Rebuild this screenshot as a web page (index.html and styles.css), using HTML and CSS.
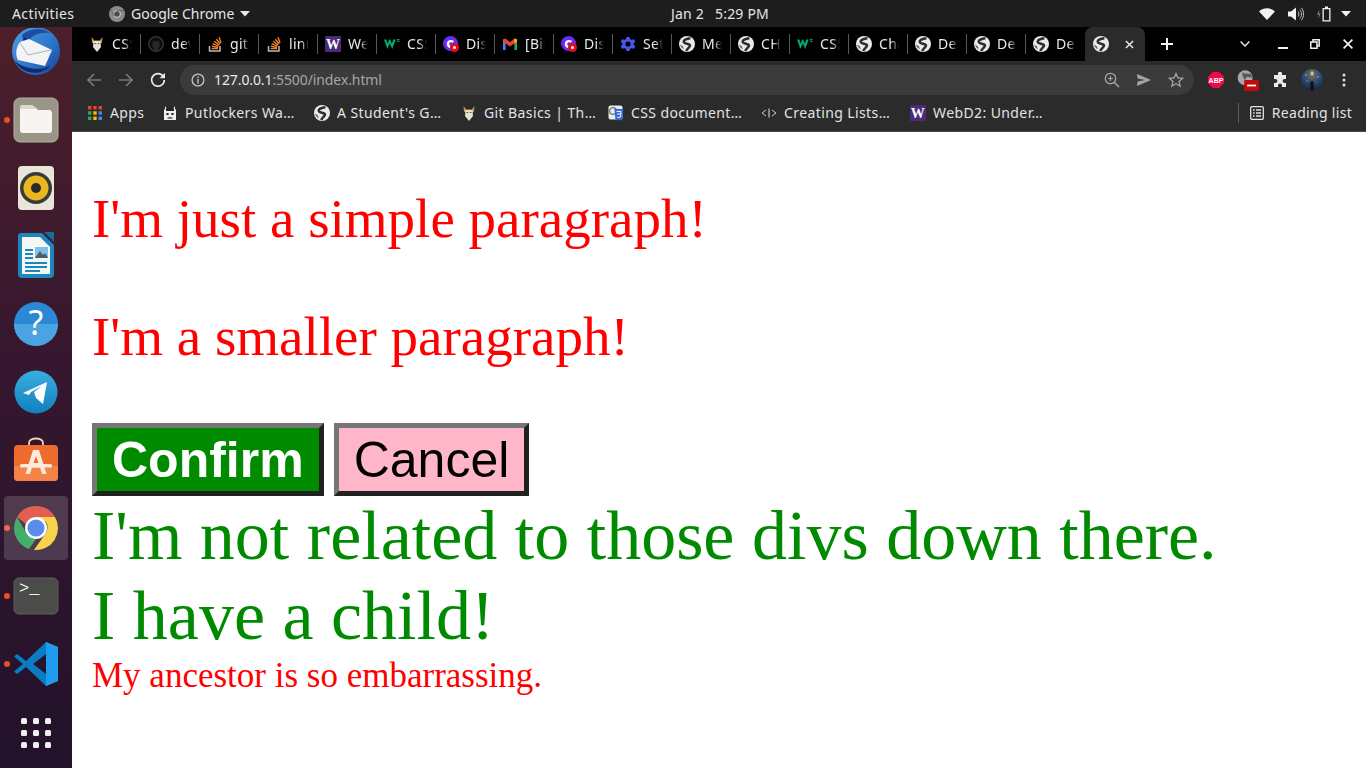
FILE: index.html
```html
<!DOCTYPE html>
<html lang="en">
<head>
<meta charset="utf-8">
<title>Screenshot</title>
<link rel="stylesheet" href="styles.css">
</head>
<body>
<svg class="sprite" aria-hidden="true">
  <defs>
    <symbol id="globe" viewBox="0 0 16 16">
      <circle cx="8" cy="8" r="8" fill="#e8eaed"/>
      <path d="M11.4 2.2 C7.4 2.6 4.2 4.2 4.8 6.2 C5.4 8.2 10.6 7.2 11 9.4 C11.3 11.2 8.6 11.6 7.2 15" fill="none" stroke="#2c2d2f" stroke-width="2.5"/>
      <path d="M1 8.6 L4 10.6 L4.6 13.4 A7 7 0 0 1 1 8.6Z" fill="#5a5b5d"/>
    </symbol>
    <symbol id="odin" viewBox="0 0 16 16">
      <path d="M2.5 1 L5.2 4.6 L10.8 4.6 L13.5 1 L13 6.4 L11 8 L5 8 L3 6.4Z" fill="#c79a4e"/>
      <path d="M4.4 5 H11.6 V7 L12 11 L8 16 L4 11 L4.4 7Z" fill="#e7e1d4"/>
      <path d="M5.6 7 h1.6 v1 h-1.6z M8.8 7 h1.6 v1 h-1.6z" fill="#5b4a32"/>
    </symbol>
    <symbol id="so" viewBox="0 0 16 16">
      <path d="M2.5 10 V15 H13 V10" fill="none" stroke="#bcbbbb" stroke-width="1.5"/>
      <path d="M4.6 12.6 H11 M4.9 10.2 L11.1 11.5 M5.7 7.6 L11.5 10.2 M7.2 5.2 L12.2 9 M9.4 3.2 L13.2 8 M12 1.2 L14 6.8" stroke="#f48024" stroke-width="1.4" fill="none"/>
    </symbol>
    <symbol id="uw" viewBox="0 0 16 16">
      <rect width="16" height="16" fill="#4b2a7b"/>
      <text x="8" y="13" text-anchor="middle" class="uw-letter">W</text>
    </symbol>
    <symbol id="w3" viewBox="0 0 16 16">
      <path d="M0 3.6 L3.4 13 L5.8 7.4 L8.2 13 L11.8 3.6 H9.2 L7.9 7.6 L6.2 3.6 H5.2 L3.6 7.6 L2.4 3.6Z" fill="#04aa6d"/>
      <path d="M13 3 h2.4 v1 h-1.4 v.6 h1.4 v1.4 h-2.4 v-.8 h1.4 v-.6 h-1.4z" fill="#04aa6d"/>
    </symbol>
    <symbol id="dis" viewBox="0 0 16 16">
      <circle cx="7.5" cy="7.5" r="7.5" fill="#6a2cf0"/>
      <path d="M3.8 8 C3.8 4 8 3 11 5 L9.8 6.8 C8 5.8 6.2 6.4 6.2 8 C6.2 9.4 7.4 10 8.6 9.8 L8 12 C5.4 12.4 3.8 10.4 3.8 8Z" fill="#fff"/>
      <circle cx="11.5" cy="11.5" r="4.5" fill="#e8091c"/>
      <circle cx="11.5" cy="11.5" r="1.5" fill="#fff"/>
    </symbol>
  </defs>
</svg>

<div class="screen">
  <header class="topbar">
    <span class="top-activities">Activities</span>
    <span class="top-app">
      <svg class="top-app-icon" viewBox="0 0 16 16"><circle cx="8" cy="8" r="8" fill="#8b8b8b"/><circle cx="8" cy="8" r="3.4" fill="#4a4a4a" stroke="#d8d8d8" stroke-width="1"/><path d="M8 4.6 H15 M5 9.8 L2 4" stroke="#5f5f5f" stroke-width="1"/></svg>
      <span>Google Chrome</span>
      <svg class="caret" viewBox="0 0 10 6"><path d="M0 0 H10 L5 5.5Z" fill="#e8e8e8"/></svg>
    </span>
    <span class="top-clock"><span>Jan 2</span><span>5:29 PM</span></span>
    <span class="top-tray">
      <svg class="tray-wifi" viewBox="0 0 16 12"><path d="M0 3.6 C4.4 -0.8 11.6 -0.8 16 3.6 L8 12Z" fill="#f2f2f2"/></svg>
      <svg class="tray-vol" viewBox="0 0 16 16"><path d="M0 5.5 H3 L8 1.5 V14.5 L3 10.5 H0Z" fill="#f2f2f2"/><path d="M10 5.5 C11.2 7 11.2 9 10 10.5 M11.8 3.5 C14 6 14 10 11.8 12.5 M13.4 1.8 C16.4 5.4 16.4 10.6 13.4 14.2" stroke="#c4c4c4" stroke-width="1" fill="none"/></svg>
      <svg class="tray-bat" viewBox="0 0 14 16"><path d="M2.6 3.5 L0 8.5 H2 L1 13 L3.6 7.4 H1.8Z" fill="#8a8a8a"/><path d="M8 0.5 H11 V2 H13.5 V15.5 H5.5 V2 H8Z M6.8 3.2 V14.2 H12.2 V3.2Z" fill="#f2f2f2" fill-rule="evenodd"/></svg>
      <svg class="caret caret-tray" viewBox="0 0 10 6"><path d="M0 0 H10 L5 5.5Z" fill="#f2f2f2"/></svg>
    </span>
  </header>

  <div class="desktop">
    <nav class="dock">
      <ul class="dock-list">
        <li class="dock-item">
          <svg class="ic48" viewBox="0 0 48 48">
            <defs><linearGradient id="tb" x1="0" y1="0" x2="1" y2="1"><stop offset="0" stop-color="#4fa2e6"/><stop offset=".6" stop-color="#2a73c8"/><stop offset="1" stop-color="#173f95"/></linearGradient></defs>
            <circle cx="24" cy="23" r="24" fill="url(#tb)"/>
            <path d="M10 7 C18 0 30 -1 38 5 C28 4 21 7 17 12 L12 16Z" fill="#1d4ea3"/>
            <circle cx="13" cy="11" r="1.6" fill="#0f2c66"/>
            <path d="M8 14 L17 11 L40 22 L33 38 L6 32 C3 27 4 19 8 14Z" fill="#f4f4f7"/>
            <path d="M8 15 L16 27 L39 22" fill="none" stroke="#a9b3c2" stroke-width="1"/>
            <path d="M2 32 C10 40 26 44 38 38 C32 46 12 50 2 32Z" fill="#13296d"/>
          </svg>
        </li>
        <li class="dock-item dock-running">
          <svg class="ic48" viewBox="0 0 48 48">
            <rect x="2" y="2" width="44" height="44" rx="6" fill="#9b9586" stroke="#b6b0a3" stroke-width="1"/>
            <path d="M8 12 A3 3 0 0 1 11 9 H20 L26 14 H36 A3 3 0 0 1 40 17 V34 A3 3 0 0 1 37 37 H11 A3 3 0 0 1 8 34Z" fill="#f6f5f2"/>
            <path d="M8 12 A3 3 0 0 1 11 9 H20 L26 13 H8Z" fill="#dad7cf"/>
          </svg>
        </li>
        <li class="dock-item">
          <svg class="ic48" viewBox="0 0 48 48">
            <rect x="6" y="2" width="36" height="44" rx="4" fill="#e9e5d8"/>
            <circle cx="24" cy="24" r="16" fill="#3a3a38"/>
            <circle cx="24" cy="24" r="12.5" fill="#e9b820"/>
            <circle cx="24" cy="24" r="5" fill="#2a2a2a"/>
          </svg>
        </li>
        <li class="dock-item">
          <svg class="ic48" viewBox="0 0 48 48">
            <path d="M32 0 H42 V10Z" fill="#1a6a9c"/>
            <path d="M9 1 H30 L42 13 V42 A4 4 0 0 1 38 46 H10 A4 4 0 0 1 6 42 V4 A3 3 0 0 1 9 1Z" fill="#1b87bf"/>
            <path d="M10 5 H28 L38 15 V42 H10Z" fill="#f6f6f4"/>
            <path d="M13 17 H21 V19 H13Z M13 21 H21 V23 H13Z M13 25 H21 V27 H13Z M13 30 H35 V32 H13Z M13 34 H35 V36 H13Z M13 38 H28 V40 H13Z" fill="#1b87bf"/>
            <rect x="23" y="15" width="13" height="11" fill="#7fc2e4"/>
            <path d="M23 26 L28 19 L31 23 L33 21 L36 26Z" fill="#4e5d68"/>
          </svg>
        </li>
        <li class="dock-item">
          <svg class="ic48" viewBox="0 0 48 48">
            <circle cx="24" cy="24" r="22" fill="#2a88d6"/>
            <path d="M2 24 H46 A22 22 0 0 1 2 24Z" fill="#4aa3e2"/>
            <text x="24" y="35" text-anchor="middle" class="help-mark">?</text>
          </svg>
        </li>
        <li class="dock-item">
          <svg class="ic48" viewBox="0 0 48 48">
            <defs><linearGradient id="tg" x1="0" y1="0" x2="0" y2="1"><stop offset="0" stop-color="#37aee2"/><stop offset="1" stop-color="#1280bd"/></linearGradient></defs>
            <circle cx="24" cy="24" r="21.5" fill="url(#tg)"/>
            <path d="M11 25 L35 14 L31 36 L24 30 L22 24 L30 18 L19 24 L17 27Z" fill="#fff"/>
          </svg>
        </li>
        <li class="dock-item">
          <svg class="ic48" viewBox="0 0 48 48">
            <path d="M17 10 V7 C17 1 31 1 31 7 V10" fill="none" stroke="#f3d6ae" stroke-width="1.8"/>
            <rect x="2" y="9" width="44" height="36" rx="4" fill="#ee6c30"/>
            <path d="M2 30 H46 V41 A4 4 0 0 1 42 45 H6 A4 4 0 0 1 2 41Z" fill="#f58248"/>
            <path d="M21 14 H27 L34.5 38 H30 L28 31.5 H20 L18 38 H13.5Z M24 20 L21.5 27 H26.5Z" fill="#fbe9dc"/>
            <rect x="8" y="28" width="32" height="3.5" rx="1.5" fill="#fbe9dc"/>
          </svg>
        </li>
        <li class="dock-item dock-running dock-active">
          <svg class="ic48" viewBox="0 0 48 48">
            <path d="M24 2 A22 22 0 0 1 43 13 H24 A11 11 0 0 0 14 20 L5 13 A22 22 0 0 1 24 2Z" fill="#d9412f"/>
            <path d="M5 13 L14.5 29.5 A11 11 0 0 0 24 35 L17 45 A22 22 0 0 1 5 13Z" fill="#1f9e50"/>
            <path d="M43 13 A22 22 0 0 1 22 46 L33.5 29.5 A11 11 0 0 0 34 18 L24 13Z" fill="#f8cb2d"/>
            <circle cx="24" cy="24" r="11" fill="#fff"/>
            <circle cx="24" cy="24" r="8.6" fill="#3b78e7"/>
          </svg>
        </li>
        <li class="dock-item dock-running">
          <svg class="ic48" viewBox="0 0 48 48">
            <rect x="2" y="6" width="44" height="36" rx="5" fill="#4b4b49" stroke="#5e5e5c" stroke-width="1"/>
            <text x="7" y="21" class="term-mark">&gt;_</text>
          </svg>
        </li>
        <li class="dock-item dock-running">
          <svg class="ic48" viewBox="0 0 48 48">
            <path d="M34 2 L46 7 V41 L34 46 L14 27 L5 34 L2 31.5 L11 24 L2 16.5 L5 14 L14 21Z M34 14 L21 24 L34 34Z" fill="#0a7cc4"/>
            <path d="M34 2 L46 7 V41 L34 46Z" fill="#1f9cf0"/>
          </svg>
        </li>
        <li class="dock-item">
          <svg class="ic-apps" viewBox="0 0 30 30">
            <rect x="0" y="0" width="6" height="6" rx="1.5"/><rect x="12" y="0" width="6" height="6" rx="1.5"/><rect x="24" y="0" width="6" height="6" rx="1.5"/>
            <rect x="0" y="12" width="6" height="6" rx="1.5"/><rect x="12" y="12" width="6" height="6" rx="1.5"/><rect x="24" y="12" width="6" height="6" rx="1.5"/>
            <rect x="0" y="24" width="6" height="6" rx="1.5"/><rect x="12" y="24" width="6" height="6" rx="1.5"/><rect x="24" y="24" width="6" height="6" rx="1.5"/>
          </svg>
        </li>
      </ul>
    </nav>

    <div class="browser">
      <div class="tabstrip">
        <div class="tab"><svg class="fav"><use href="#odin"/></svg><span class="tab-title">CSS</span></div>
        <div class="tab"><svg class="fav" viewBox="0 0 16 16"><circle cx="8" cy="8" r="7.2" fill="#0c0c0d" stroke="#2e3033" stroke-width="1.6"/><path d="M5.8 15 V12.4 C4 11 3.8 8 4.8 6.8 C4.6 5.8 4.8 5 5 4.6 C5.8 4.6 6.4 5 6.8 5.4 C7.6 5.2 8.4 5.2 9.2 5.4 C9.6 5 10.2 4.6 11 4.6 C11.2 5 11.4 5.8 11.2 6.8 C12.2 8 12 11 10.2 12.4 V15Z" fill="#25272a"/></svg><span class="tab-title">dev</span></div>
        <div class="tab"><svg class="fav"><use href="#so"/></svg><span class="tab-title">git</span></div>
        <div class="tab"><svg class="fav"><use href="#so"/></svg><span class="tab-title">linux</span></div>
        <div class="tab"><svg class="fav"><use href="#uw"/></svg><span class="tab-title">Web</span></div>
        <div class="tab"><svg class="fav"><use href="#w3"/></svg><span class="tab-title">CSS</span></div>
        <div class="tab"><svg class="fav"><use href="#dis"/></svg><span class="tab-title">Disc</span></div>
        <div class="tab"><svg class="fav" viewBox="0 0 16 16"><path d="M1 14 V3.4 L3.6 2.4 V14Z" fill="#4285f4"/><path d="M12.4 14 V2.4 L15 3.4 V14Z" fill="#34a853"/><path d="M1 3.4 L3.4 2.4 L8 6.2 L12.6 2.4 L15 3.4 V5.4 L8 10.6 L1 5.4Z" fill="#ea4335"/><path d="M12.4 2.4 L15 3.4 V5.4 L12.4 7.4Z" fill="#fbbc04"/></svg><span class="tab-title">[Bit</span></div>
        <div class="tab"><svg class="fav"><use href="#dis"/></svg><span class="tab-title">Disc</span></div>
        <div class="tab"><svg class="fav" viewBox="0 0 16 16"><path d="M6.4 1 H9.6 L10 3 L11.8 3.9 L13.8 3 L15.4 5.8 L13.8 7.1 V8.9 L15.4 10.2 L13.8 13 L11.8 12.1 L10 13 L9.6 15 H6.4 L6 13 L4.2 12.1 L2.2 13 L0.6 10.2 L2.2 8.9 V7.1 L0.6 5.8 L2.2 3 L4.2 3.9 L6 3Z M8 5.4 A2.6 2.6 0 1 0 8 10.6 A2.6 2.6 0 1 0 8 5.4Z" fill="#4a55e8" fill-rule="evenodd"/></svg><span class="tab-title">Sett</span></div>
        <div class="tab"><svg class="fav"><use href="#globe"/></svg><span class="tab-title">Men</span></div>
        <div class="tab"><svg class="fav"><use href="#globe"/></svg><span class="tab-title">CHA</span></div>
        <div class="tab"><svg class="fav"><use href="#w3"/></svg><span class="tab-title">CSS</span></div>
        <div class="tab"><svg class="fav"><use href="#globe"/></svg><span class="tab-title">Cha</span></div>
        <div class="tab"><svg class="fav"><use href="#globe"/></svg><span class="tab-title">Des</span></div>
        <div class="tab"><svg class="fav"><use href="#globe"/></svg><span class="tab-title">Des</span></div>
        <div class="tab tab-last"><svg class="fav"><use href="#globe"/></svg><span class="tab-title">Des</span></div>
        <div class="tab-active">
          <svg class="fav"><use href="#globe"/></svg>
          <svg class="tab-close" viewBox="0 0 10 10"><path d="M1 1 L9 9 M9 1 L1 9" stroke="#e8eaed" stroke-width="1.6"/></svg>
        </div>
        <svg class="new-tab" viewBox="0 0 12 12"><path d="M6 0 V12 M0 6 H12" stroke="#f1f3f4" stroke-width="2"/></svg>
        <svg class="win-chevron" viewBox="0 0 10 6"><path d="M0.6 0.6 L5 5 L9.4 0.6" fill="none" stroke="#e8eaed" stroke-width="1.4"/></svg>
        <svg class="win-min" viewBox="0 0 10 10"><path d="M0 9 H10" stroke="#f1f1f1" stroke-width="2"/></svg>
        <svg class="win-max" viewBox="0 0 10 10"><path d="M3 3 V0.8 H9.2 V7 H7 M0.8 3 H7 V9.2 H0.8Z" fill="none" stroke="#f1f1f1" stroke-width="1.5"/></svg>
        <svg class="win-close" viewBox="0 0 10 10"><path d="M0.6 0.6 L9.4 9.4 M9.4 0.6 L0.6 9.4" stroke="#f1f1f1" stroke-width="1.7"/></svg>
      </div>

      <div class="toolbar">
        <svg class="tb-icon" viewBox="0 0 16 16"><path d="M15 8 H2 M8 2 L2 8 L8 14" fill="none" stroke="#77797c" stroke-width="1.7"/></svg>
        <svg class="tb-icon" viewBox="0 0 16 16"><path d="M1 8 H14 M8 2 L14 8 L8 14" fill="none" stroke="#77797c" stroke-width="1.7"/></svg>
        <svg class="tb-icon tb-reload" viewBox="0 0 16 16"><path d="M13.6 5 A6.3 6.3 0 1 0 14.3 8" fill="none" stroke="#e8eaed" stroke-width="1.7"/><path d="M9.6 6.2 H15 V0.8Z" fill="#e8eaed"/></svg>
        <div class="omnibox">
          <svg class="omni-info" viewBox="0 0 14 14"><circle cx="7" cy="7" r="5.9" fill="none" stroke="#c4c7c9" stroke-width="1.3"/><path d="M7 6 V10.4 M7 3.6 V5" stroke="#c4c7c9" stroke-width="1.4"/></svg>
          <span class="omni-url"><b>127.0.0.1</b>:5500/index.html</span>
          <svg class="omni-act" viewBox="0 0 16 16"><circle cx="6.5" cy="6.5" r="5.2" fill="none" stroke="#a3a6a9" stroke-width="1.3"/><path d="M10.2 10.2 L15 15" stroke="#a3a6a9" stroke-width="1.6"/><path d="M6.5 4 V9 M4 6.5 H9" stroke="#a3a6a9" stroke-width="1.1"/></svg>
          <svg class="omni-act" viewBox="0 0 16 16"><path d="M1 2 L15 8 L1 14 L1.6 9.4 L9 8 L1.6 6.6Z" fill="#a3a6a9"/></svg>
          <svg class="omni-act" viewBox="0 0 16 16"><path d="M8 1.6 L9.9 6 L14.6 6.4 L11 9.5 L12.1 14.2 L8 11.7 L3.9 14.2 L5 9.5 L1.4 6.4 L6.1 6Z" fill="none" stroke="#a3a6a9" stroke-width="1.3"/></svg>
        </div>
        <div class="ext-row">
          <span class="ext"><svg class="ext-icon" viewBox="0 0 16 16"><path d="M4.8 0 H11.2 L16 4.8 V11.2 L11.2 16 H4.8 L0 11.2 V4.8Z" fill="#f2074a"/><text x="8" y="10.8" text-anchor="middle" class="abp-mark">ABP</text></svg></span>
          <span class="ext"><svg class="ext-icon ext-wide" viewBox="0 0 20 20"><circle cx="7.4" cy="8" r="6.8" fill="#a5a7a9"/><path d="M5 2.4 C7 5 9 3.6 12.6 4.6 L14 8 L9 7 L7 10 L5 6Z" fill="#55575a"/><rect x="6.5" y="10" width="13.5" height="10" rx="1" fill="#c20a0a"/><rect x="9.2" y="14.2" width="8.2" height="1.6" fill="#fff"/></svg></span>
          <span class="ext"><svg class="ext-icon" viewBox="0 0 16 16"><path d="M6 1.6 A2 2 0 0 1 10 1.6 V3 H14 V7 H12.6 A2 2 0 0 0 12.6 11 H14 V15 H10 V13.6 A2 2 0 0 0 6 13.6 V15 H2 V11 H3.4 A2 2 0 0 0 3.4 7 H2 V3 H6Z" fill="#e8eaed"/></svg></span>
          <span class="ext"><svg class="avatar" viewBox="0 0 22 22"><defs><radialGradient id="av" cx="50%" cy="25%" r="70%"><stop offset="0" stop-color="#7a6f5e"/><stop offset=".45" stop-color="#33537a"/><stop offset="1" stop-color="#1b2a42"/></radialGradient></defs><circle cx="11" cy="11" r="11" fill="url(#av)"/><rect x="9.6" y="2.5" width="3" height="4" rx="1" fill="#f2b860"/><circle cx="5" cy="6" r=".8" fill="#e8a860"/><circle cx="17" cy="8" r=".8" fill="#e8a860"/><circle cx="6" cy="12" r=".7" fill="#c89060"/><path d="M9 22 V15 L10 12 H12 L13 15 V22Z" fill="#14161c"/></svg></span>
          <span class="ext"><svg class="kebab" viewBox="0 0 4 14"><circle cx="2" cy="2" r="1.5" fill="#dfe1e3"/><circle cx="2" cy="7" r="1.5" fill="#dfe1e3"/><circle cx="2" cy="12" r="1.5" fill="#dfe1e3"/></svg></span>
        </div>
      </div>

      <div class="bookmarks">
        <span class="bm bm-apps"><svg class="fav" viewBox="0 0 16 16"><rect x="1" y="1" width="3.4" height="3.4" fill="#ea4335"/><rect x="6.3" y="1" width="3.4" height="3.4" fill="#ea4335"/><rect x="11.6" y="1" width="3.4" height="3.4" fill="#ea4335"/><rect x="1" y="6.3" width="3.4" height="3.4" fill="#34a853"/><rect x="6.3" y="6.3" width="3.4" height="3.4" fill="#fbbc04"/><rect x="11.6" y="6.3" width="3.4" height="3.4" fill="#4285f4"/><rect x="1" y="11.6" width="3.4" height="3.4" fill="#34a853"/><rect x="6.3" y="11.6" width="3.4" height="3.4" fill="#fbbc04"/><rect x="11.6" y="11.6" width="3.4" height="3.4" fill="#4285f4"/></svg><span class="bm-label">Apps</span></span>
        <span class="bm bm-put"><svg class="fav" viewBox="0 0 16 16"><path d="M3 1 L5 4 H11 L13 1 V4 L14 5 V15 H2 V5 L3 4Z" fill="#edeff2"/><path d="M4 3.4 H12 V6 H4Z" fill="#20242c"/><path d="M4.4 8 h2.2 v2 h-2.2z M9.4 8 h2.2 v2 h-2.2z M5 13.6 C6 11.8 10 11.8 11 13.6Z" fill="#20242c"/></svg><span class="bm-label">Putlockers Wa…</span></span>
        <span class="bm bm-stu"><svg class="fav"><use href="#globe"/></svg><span class="bm-label">A Student's G…</span></span>
        <span class="bm bm-git"><svg class="fav"><use href="#odin"/></svg><span class="bm-label">Git Basics | Th…</span></span>
        <span class="bm bm-css"><svg class="fav" viewBox="0 0 16 16"><rect x="0.5" y="0.5" width="14" height="14" rx="2" fill="#e8eaed"/><circle cx="5" cy="6" r="3.4" fill="none" stroke="#6e7278" stroke-width="1.2"/><path d="M6.4 4 H15.4 L14.4 14.4 L10.9 15.6 L7.4 14.4Z" fill="#3367d6"/><path d="M8.6 6.4 H13 L12.6 12 L10.9 12.7 L9.2 12 M9 9 H12.8" fill="none" stroke="#fff" stroke-width="1"/></svg><span class="bm-label">CSS document…</span></span>
        <span class="bm bm-cre"><svg class="fav" viewBox="0 0 16 16"><path d="M5 5 L1 8 L5 11 M11 5 L15 8 L11 11" fill="none" stroke="#c4c7c9" stroke-width="1"/><path d="M8 3.5 V12.5" stroke="#c4c7c9" stroke-width="1.2"/></svg><span class="bm-label">Creating Lists…</span></span>
        <span class="bm bm-web"><svg class="fav"><use href="#uw"/></svg><span class="bm-label">WebD2: Under…</span></span>
        <span class="bm-reading">
          <svg class="fav" viewBox="0 0 14 14"><rect x="0.7" y="0.7" width="12.6" height="12.6" rx="1" fill="none" stroke="#dfe1e3" stroke-width="1.3"/><path d="M3 4 H4.6 M3 7 H4.6 M3 10 H4.6 M6 4 H11 M6 7 H11 M6 10 H11" stroke="#dfe1e3" stroke-width="1.3"/></svg>
          <span class="bm-label">Reading list</span>
        </span>
      </div>

      <main class="page">
        <p class="para">I'm just a simple paragraph!</p>
        <p class="para">I'm a smaller paragraph!</p>
        <div class="buttons">
          <button class="btn btn-confirm">Confirm</button>
          <button class="btn btn-cancel">Cancel</button>
        </div>
        <div class="big">I'm not related to those divs down there.</div>
        <div class="big">I have a child!
          <div class="small">My ancestor is so embarrassing.</div>
        </div>
      </main>
    </div>
  </div>
</div>
</body>
</html>
```
FILE: styles.css
```css
* { box-sizing: border-box; }
html, body { margin: 0; height: 100%; overflow: hidden; }
body { font-family: "Noto Sans", sans-serif; background: #fff; }
.sprite { width: 0; height: 0; display: block; overflow: hidden; }
.uw-letter { font: bold 14px "Liberation Serif", serif; fill: #fff; }
.help-mark { font: 34px "Noto Sans", sans-serif; fill: #fff; }
.term-mark { font: 17px "Liberation Mono", monospace; fill: #eee; }
.abp-mark { font: bold 7px "Liberation Sans", sans-serif; fill: #fff; }

.screen { width: 1366px; height: 768px; display: flex; flex-direction: column; }

/* top bar */
.topbar { height: 27px; flex: none; background: #1d1d1d; color: #e6e6e6; display: flex; align-items: center; font-size: 14px; position: relative; padding-left: 12px; }
.top-activities { width: 97px; letter-spacing: .4px; }
.top-app { display: flex; align-items: center; gap: 6px; }
.top-app-icon { width: 16px; height: 16px; }
.caret { width: 10px; height: 6px; }
.top-clock { position: absolute; left: 671px; display: flex; gap: 11px; letter-spacing: .2px; }
.top-tray { margin-left: auto; display: flex; align-items: center; margin-right: 15px; }
.tray-wifi { width: 16px; height: 12px; }
.tray-vol { width: 16px; height: 16px; margin-left: 13px; }
.tray-bat { width: 14px; height: 16px; margin-left: 13px; }
.caret-tray { margin-left: 10px; }

.desktop { flex: 1; display: flex; min-height: 0; }

/* dock */
.dock { width: 72px; flex: none; overflow: hidden; background: linear-gradient(180deg, #4c1f2a 0%, #36172f 45%, #22122a 100%); }
.dock-list { list-style: none; margin: -9px 0 0; padding: 0; }
.dock-item { height: 68px; display: flex; align-items: center; justify-content: center; position: relative; }
.ic48 { width: 48px; height: 48px; }
.ic-apps { width: 30px; height: 30px; fill: #efefef; position: relative; top: 1px; }
.dock-running::before { content: ""; position: absolute; left: 4px; top: 31px; width: 6px; height: 6px; border-radius: 50%; background: #e9501f; }
.dock-active::after { content: ""; position: absolute; left: 4px; top: 2px; width: 64px; height: 64px; border-radius: 4px; background: rgba(255,255,255,.16); }

/* browser */
.browser { flex: 1; min-width: 0; display: flex; flex-direction: column; }
.tabstrip { height: 34px; flex: none; background: #000; display: flex; align-items: center; padding-left: 10px; color: #e8eaed; font-size: 14px; }
.tab { width: 59px; height: 34px; flex: none; display: flex; align-items: center; padding-left: 7px; position: relative; }
.tab::after { content: ""; position: absolute; right: 0; top: 7px; width: 1px; height: 20px; background: #55585c; }
.tab-last::after { display: none; }
.fav { width: 16px; height: 16px; flex: none; }
.tab-title { margin: 0 0 2px 7px; width: 20px; overflow: hidden; white-space: nowrap; letter-spacing: .3px; -webkit-mask-image: linear-gradient(90deg, #000 60%, transparent 100%); mask-image: linear-gradient(90deg, #000 60%, transparent 100%); }
.tab-active { width: 60px; height: 34px; flex: none; background: #2b2b2b; border-radius: 8px 8px 0 0; display: flex; align-items: center; padding-left: 8px; }
.tab-close { width: 9px; height: 9px; margin-left: 16px; }
.new-tab { width: 12px; height: 12px; margin-left: 16px; flex: none; }
.win-chevron { width: 10px; height: 6px; margin-left: 67px; flex: none; }
.win-min { width: 10px; height: 10px; margin-left: 28px; flex: none; }
.win-max { width: 10px; height: 10px; margin-left: 22px; flex: none; }
.win-close { width: 10px; height: 10px; margin-left: 23px; flex: none; }

.toolbar { height: 34px; flex: none; background: #2b2b2b; display: flex; align-items: center; padding: 4px 0 0 14px; }
.tb-icon { width: 16px; height: 16px; margin-right: 16px; flex: none; }
.tb-reload { margin-right: 14px; }
.omnibox { width: 1014px; height: 30px; flex: none; background: #3b3b3b; border-radius: 15px; display: flex; align-items: center; padding-left: 11px; font-size: 14px; color: #a3a6a9; }
.omni-info { width: 14px; height: 14px; flex: none; }
.omni-url { margin: 0 0 2px 9px; flex: 1; letter-spacing: -.1px; }
.omni-url b { font-weight: 400; color: #e8eaed; }
.omni-act { width: 16px; height: 16px; margin-right: 16px; flex: none; }
.omni-act:last-child { margin-right: 10px; }
.ext-row { display: flex; margin-left: 6px; }
.ext { width: 32px; height: 28px; display: flex; align-items: center; justify-content: center; }
.ext-icon { width: 16px; height: 16px; }
.ext-wide { width: 22px; height: 22px; }
.avatar { width: 22px; height: 22px; }
.kebab { width: 4px; height: 14px; }

.bookmarks { height: 37px; flex: none; background: #2b2b2b; border-bottom: 1px solid #4a4a4a; display: flex; align-items: center; padding-left: 15px; color: #e1e3e5; font-size: 14px; letter-spacing: .4px; }
.bm { display: flex; align-items: center; gap: 7px; flex: none; white-space: nowrap; }
.bm-label { margin-bottom: 2px; }
.bm-apps { width: 75px; }
.bm-put { width: 152px; }
.bm-stu { width: 147px; }
.bm-git { width: 147px; }
.bm-css { width: 153px; }
.bm-cre { width: 149px; }
.bm-reading { margin-left: auto; margin-right: 14px; display: flex; align-items: center; gap: 8px; border-left: 1px solid #5a5c5f; padding-left: 11px; height: 20px; letter-spacing: .3px; }
.bm-reading .fav { width: 14px; height: 14px; }

/* page */
.page { flex: 1; background: #fff; padding: 0 20px; font-family: "Liberation Serif", serif; overflow: hidden; }
.para { margin: 55px 0; font-size: 55px; color: #f00; }
.buttons { display: flex; gap: 10px; }
.btn { font-family: "Liberation Sans", sans-serif; font-size: 50px; padding: 3px 15px 2px; border-style: solid; border-width: 5px; border-color: #767676 #212121 #212121 #767676; }
.btn-confirm { background: #008a00; color: #fff; font-weight: 700; }
.btn-cancel { background: #ffb6c8; color: #000; }
.big { font-size: 70px; color: #008a00; }
.small { font-size: 35px; color: #f00; }
```
